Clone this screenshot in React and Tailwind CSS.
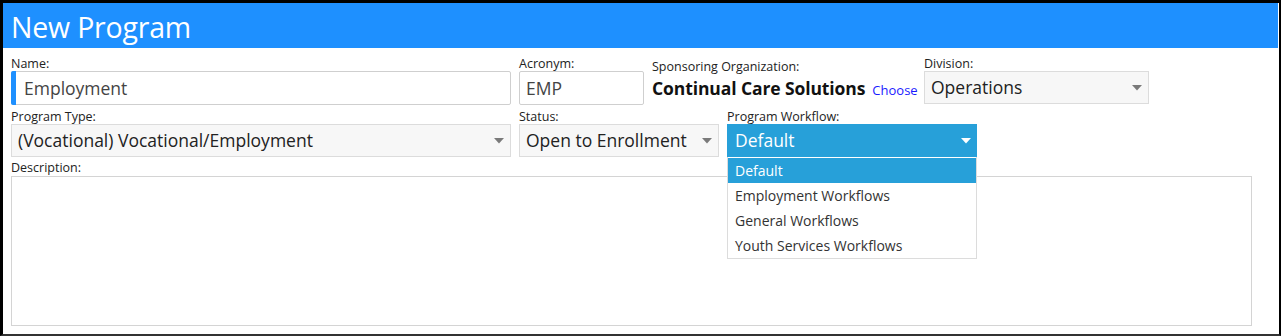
import React from "react";

const Caret = ({ color = "#7a7a7a" }) => (
  <svg width="10" height="6" viewBox="0 0 10 6" className="shrink-0">
    <path d="M0 0 L10 0 L5 5.5 Z" fill={color} />
  </svg>
);

const Label = ({ children }) => (
  <div className="text-[12.5px] leading-[14px] text-[#222] h-[14px] whitespace-nowrap">{children}</div>
);

export default function App() {
  return (
    <div
      className="w-[1281px] h-[336px] bg-white border-t-[3px] border-l-[3px] border-r-[2px] border-b-[2px] border-t-black border-l-black border-r-black border-b-[#333] pr-px overflow-hidden"
      style={{ fontFamily: '"Open Sans", "Noto Sans", sans-serif' }}
    >
      <div className="h-[45px] bg-[#1e90ff] pl-[8px] flex items-center">
        <span className="text-white text-[28.5px] leading-none tracking-[-0.2px] pt-[3px]">New Program</span>
      </div>

      <div className="pl-[8px] pt-[9px] w-[1249px]">
        {/* Row 1 */}
        <div className="flex gap-[8px] h-[48px]">
          <div className="w-[500px]">
            <Label>Name:</Label>
            <div className="h-[34px] border border-[#cfcfcf] rounded-[2px] flex items-center relative bg-white">
              <div className="absolute left-[-1px] top-[-1px] bottom-[-1px] w-[5px] bg-[#1e90ff] rounded-l-[2px]" />
              <span className="pl-[12px] text-[17.5px] text-[#444]">Employment</span>
            </div>
          </div>
          <div className="w-[125px]">
            <Label>Acronym:</Label>
            <div className="h-[34px] border border-[#cfcfcf] rounded-[2px] flex items-center bg-white">
              <span className="pl-[6px] text-[17.5px] text-[#444]">EMP</span>
            </div>
          </div>
          <div className="w-[264px] pt-[3px] whitespace-nowrap">
            <Label>Sponsoring Organization:</Label>
            <div className="flex items-baseline mt-[2px] whitespace-nowrap">
              <span className="text-[17.5px] leading-[24px] font-bold text-[#111] tracking-[-0.1px]">Continual Care Solutions</span>
              <span className="ml-[7px] text-[13px] text-[#1a1aff]">Choose</span>
            </div>
          </div>
          <div className="w-[225px]">
            <Label>Division:</Label>
            <div className="h-[33px] border border-[#dcdcdc] bg-[#f7f7f7] flex items-center justify-between pr-[6px]">
              <span className="pl-[6px] text-[17.5px] text-[#222]">Operations</span>
              <Caret />
            </div>
          </div>
        </div>

        {/* Row 2 */}
        <div className="flex gap-[8px] mt-[5px]">
          <div className="w-[500px]">
            <Label>Program Type:</Label>
            <div className="h-[33px] border border-[#dcdcdc] bg-[#f7f7f7] flex items-center justify-between pr-[6px]">
              <span className="pl-[6px] text-[17.5px] text-[#222] whitespace-nowrap">(Vocational) Vocational/Employment</span>
              <Caret />
            </div>
          </div>
          <div className="w-[200px]">
            <Label>Status:</Label>
            <div className="h-[33px] border border-[#dcdcdc] bg-[#f7f7f7] flex items-center justify-between pr-[6px]">
              <span className="pl-[6px] text-[17.5px] text-[#222] whitespace-nowrap">Open to Enrollment</span>
              <Caret />
            </div>
          </div>
          <div className="w-[250px] relative z-10">
            <Label>Program Workflow:</Label>
            <div className="h-[33px] bg-[#27a0d9] flex items-center justify-between pr-[6px]">
              <span className="pl-[8px] text-[17.5px] text-white">Default</span>
              <Caret color="#ffffff" />
            </div>
            <div className="absolute left-0 top-[47px] w-[250px] bg-white border border-[#dcdcdc] border-t-0 text-[14px] leading-[25px]">
              <div className="bg-[#27a0d9] text-white pl-[7px] h-[26px] border-t border-white">Default</div>
              <div className="pl-[7px] h-[25px] text-[#333]">Employment Workflows</div>
              <div className="pl-[7px] h-[25px] text-[#333]">General Workflows</div>
              <div className="pl-[7px] h-[25px] text-[#333]">Youth Services Workflows</div>
            </div>
          </div>
        </div>

        {/* Description */}
        <div className="mt-[4px]">
          <Label>Description:</Label>
          <div className="mt-[1px] h-[150px] w-[1241px] border border-[#d4d4d4] bg-white" />
        </div>
      </div>
    </div>
  );
}
